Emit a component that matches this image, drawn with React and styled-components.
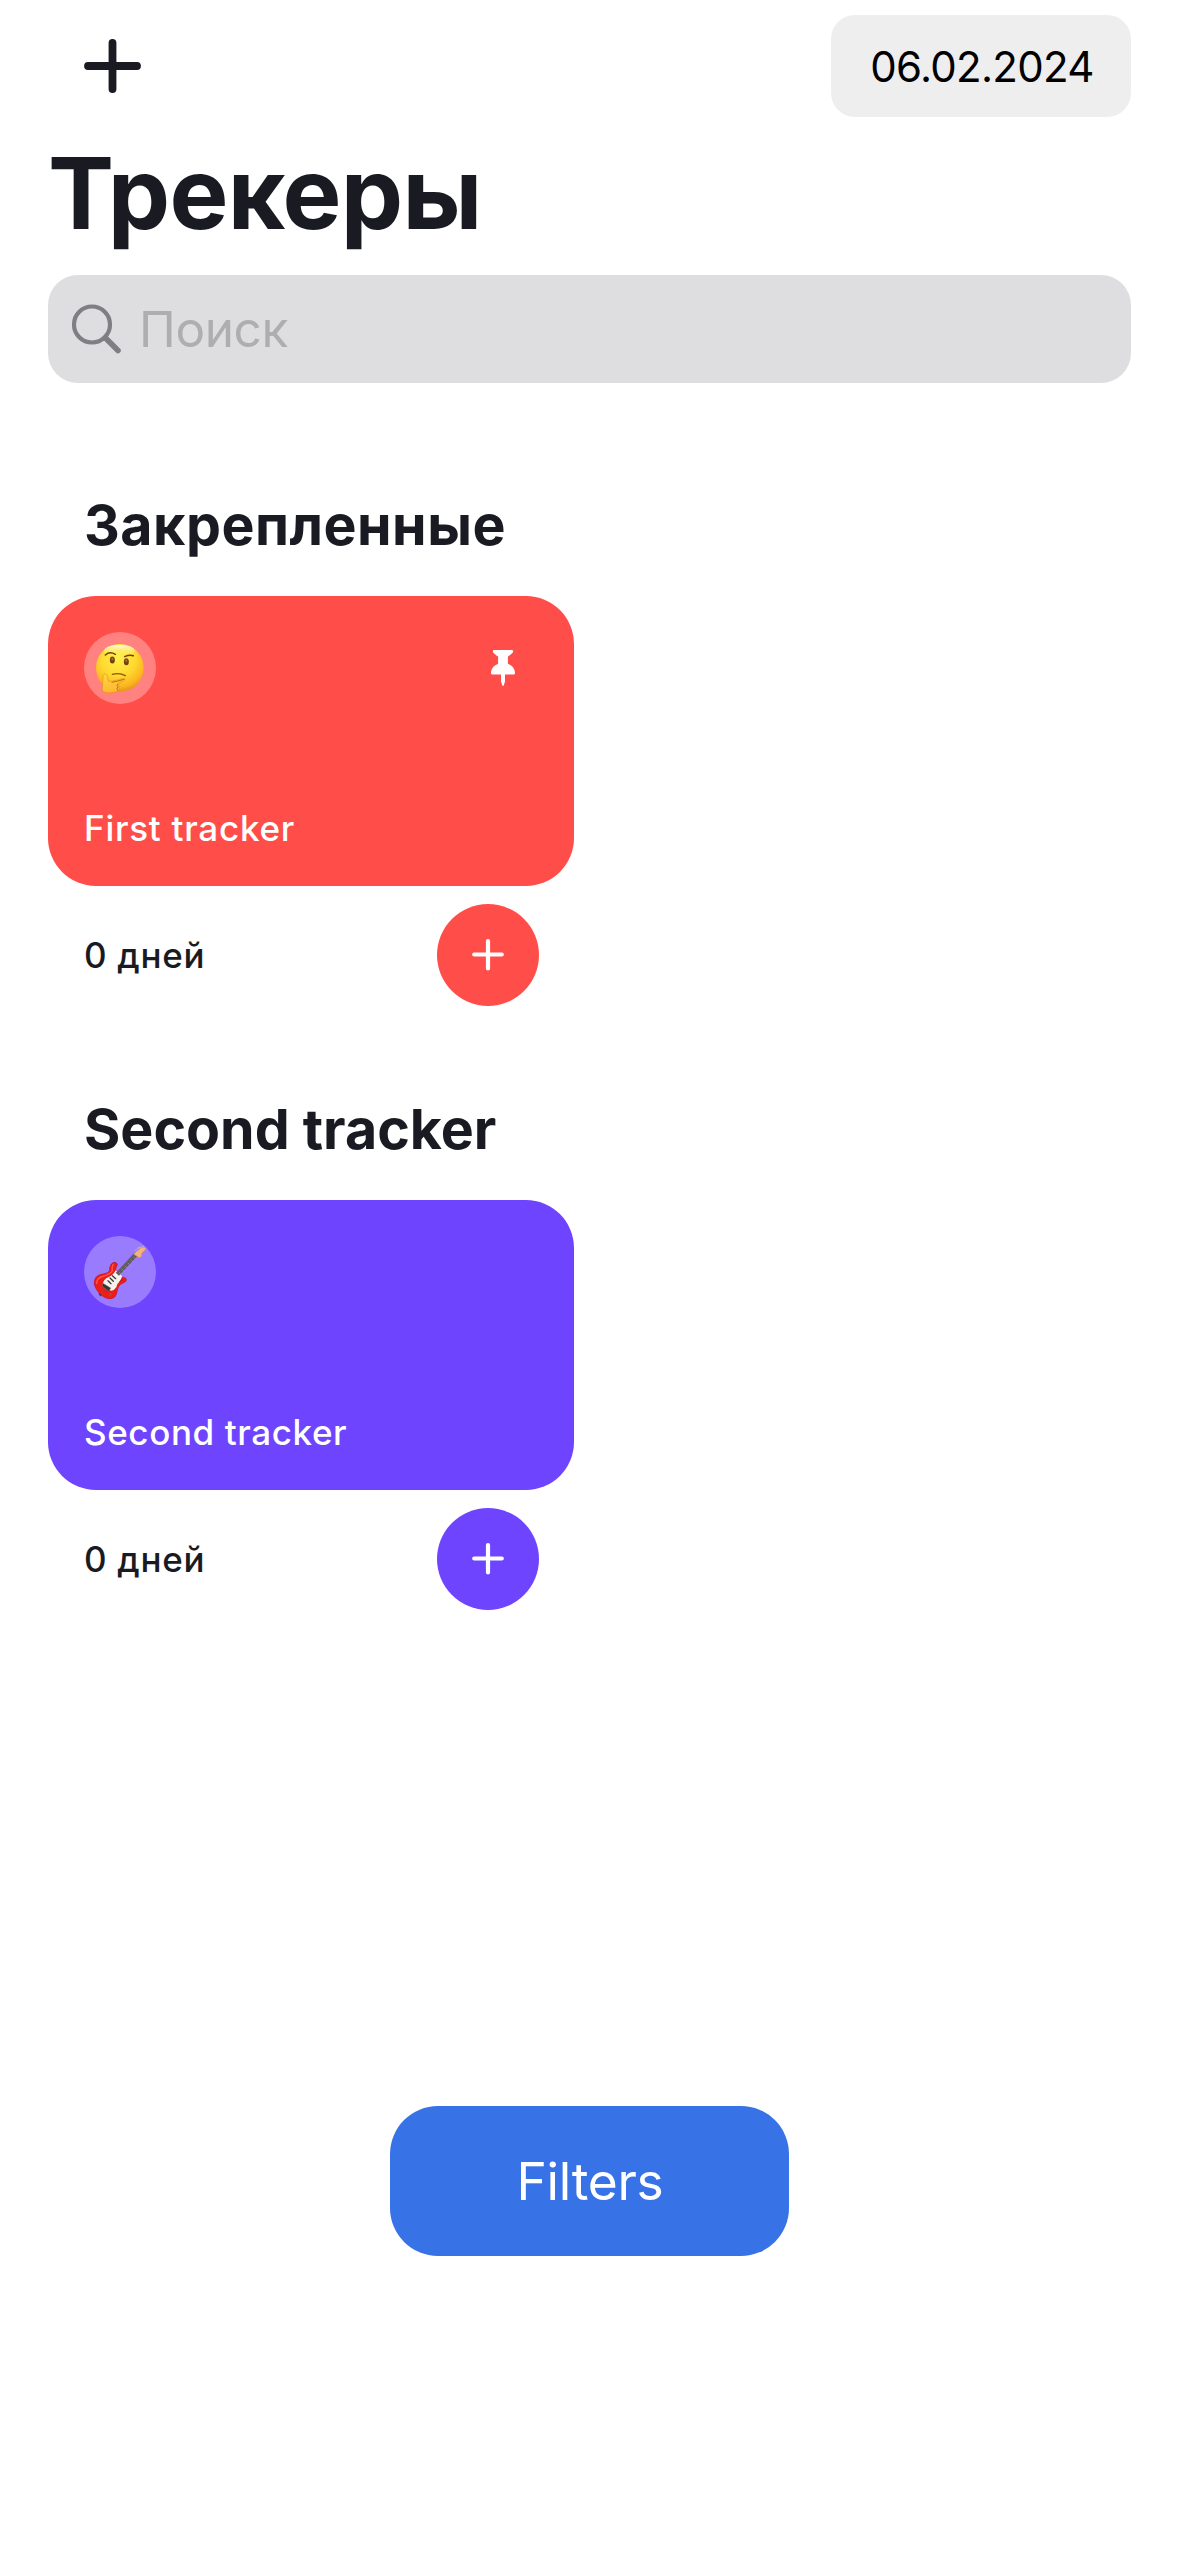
import React from 'react';
import styled, { createGlobalStyle } from 'styled-components';

const GlobalStyle = createGlobalStyle`
  * { box-sizing: border-box; }
  body { margin: 0; background: #fff; }
`;

const Screen = styled.main`
  display: flex;
  flex-direction: column;
  width: 1179px;
  height: 2556px;
  padding: 0 48px 300px;
  background: #fff;
  color: #1a1b22;
  font-family: Inter, 'Liberation Sans', sans-serif;
`;

const NavBar = styled.header`
  display: flex;
  align-items: center;
  justify-content: space-between;
  height: 132px;
  padding-left: 36px;
`;

const IconButton = styled.button`
  display: flex;
  padding: 0;
  border: 0;
  background: none;
`;

const DatePill = styled.div`
  display: flex;
  align-items: center;
  justify-content: center;
  width: 300px;
  height: 102px;
  padding-left: 2px;
  border-radius: 24px;
  background: #eeeeee;
  color: #000;
  font-size: 42px;
  letter-spacing: -0.7px;
`;

const Title = styled.h1`
  margin: 0 0 21px;
  font-size: 99px;
  font-weight: 700;
  line-height: 122px;
  letter-spacing: -0.7px;
`;

const SearchField = styled.div`
  display: flex;
  align-items: center;
  gap: 17px;
  flex: none;
  height: 108px;
  padding-left: 22px;
  border-radius: 30px;
  background: #dedee0;
  color: #aeaeb0;
  font-size: 49.5px;
  letter-spacing: -0.4px;
`;

const Sections = styled.div`
  display: flex;
  flex-direction: column;
  gap: 87px;
  padding-top: 106px;
`;

const Section = styled.section`
  width: 526px;
`;

const SectionTitle = styled.h2`
  margin: 0 0 36px;
  padding-left: 36px;
  font-size: 55.5px;
  font-weight: 700;
  line-height: 71px;
  letter-spacing: ${(p) => p.$spacing};
  white-space: nowrap;
`;

const Card = styled.article`
  display: flex;
  flex-direction: column;
  justify-content: space-between;
  height: 290px;
  padding: 36px;
  border-radius: 48px;
  background: ${(p) => p.$color};
  color: #fff;
`;

const CardTop = styled.div`
  display: flex;
  align-items: center;
  justify-content: space-between;
  padding-right: 23px;
`;

const EmojiBadge = styled.div`
  display: flex;
  width: 72px;
  height: 72px;
  border-radius: 50%;
  background: rgba(255, 255, 255, 0.3);
`;

const CardName = styled.div`
  font-size: 35px;
  font-weight: 500;
  line-height: 44px;
  letter-spacing: ${(p) => p.$spacing};
`;

const CardFooter = styled.div`
  display: flex;
  align-items: center;
  justify-content: space-between;
  margin-top: 18px;
  padding: 0 35px 0 36px;
`;

const DayCount = styled.span`
  font-size: 35px;
  font-weight: 500;
  letter-spacing: 0.7px;
`;

const RoundButton = styled.button`
  display: flex;
  align-items: center;
  justify-content: center;
  width: 102px;
  height: 102px;
  padding: 0;
  border: 0;
  border-radius: 50%;
  background: ${(p) => p.$color};
`;

const FiltersButton = styled.button`
  width: 399px;
  height: 150px;
  margin: auto auto 0;
  padding: 0 0 0 1px;
  border: 0;
  border-radius: 48px;
  background: #3772e7;
  color: #fff;
  font-family: inherit;
  font-size: 51.5px;
  line-height: 150px;
  letter-spacing: -0.3px;
`;

const PlusIcon = () => (
  <svg width="57" height="54" viewBox="0 0 57 54" fill="none" stroke="#1a1b22" strokeWidth="7.8" strokeLinecap="round">
    <path d="M4 27H53M28.5 4V50" />
  </svg>
);

const SmallPlusIcon = () => (
  <svg width="32" height="32" viewBox="0 0 32 32" fill="none" stroke="#fff" strokeWidth="4.2" strokeLinecap="round">
    <path d="M2.2 15.5H29.8M16 2.1V29.4" />
  </svg>
);

const SearchIcon = () => (
  <svg width="52" height="52" viewBox="0 0 52 52" fill="none" stroke="#7f7f83" strokeLinecap="round">
    <circle cx="22" cy="21.5" r="18" strokeWidth="4.2" />
    <path d="M35.5 35L48 47.500" strokeWidth="5.6" />
  </svg>
);

const PinIcon = () => (
  <svg width="24" height="36" viewBox="0 0 24 36" fill="#fff">
    <path d="M3.2 0H20.8C22.3 0 22.5 1.8 21.6 2.8C20.3 4.3 18.6 5.6 16.9 6.5V13.7C20.8 15.3 23.6 18.2 24 22.4C24.1 23.8 23.5 24.5 22.2 24.5H14V31.5L12.8 35.2Q12 36.6 11.2 35.2L10 31.5V24.5H1.8C.5 24.5-.1 23.8 0 22.4C.4 18.2 3.2 15.3 7.1 13.7V6.5C5.4 5.6 3.7 4.3 2.4 2.8C1.5 1.8 1.7 0 3.2 0Z" />
  </svg>
);

const ThinkingFace = () => (
  <svg width="72" height="72" viewBox="42 36 216 216" fill="none" strokeLinecap="round" strokeLinejoin="round">
    <defs>
      <radialGradient id="face" cx="0.46" cy="0.3" r="0.75">
        <stop offset="0" stopColor="#fff04a" />
        <stop offset="0.5" stopColor="#ffd82f" />
        <stop offset="0.8" stopColor="#fbb420" />
        <stop offset="1" stopColor="#dc8613" />
      </radialGradient>
      <linearGradient id="shine" x1="0" y1="0" x2="0" y2="1">
        <stop offset="0" stopColor="#fffce0" />
        <stop offset="1" stopColor="#fff04a" stopOpacity="0" />
      </linearGradient>
      <linearGradient id="hand" x1="0" y1="0" x2="0.3" y2="1">
        <stop offset="0" stopColor="#ffd84a" />
        <stop offset="1" stopColor="#ffb92c" />
      </linearGradient>
    </defs>
    <circle cx="149.500" cy="143.500" r="71.500" fill="url(#face)" />
    <ellipse cx="148" cy="93" rx="46" ry="19" fill="url(#shine)" />
    <path d="M106 105Q119 93 136 103" stroke="#70420f" strokeWidth="4.500" />
    <path d="M164 110Q177 104 190 107" stroke="#70420f" strokeWidth="4.500" />
    <ellipse cx="127" cy="120" rx="7.500" ry="10.500" fill="#70420f" />
    <ellipse cx="169" cy="125" rx="7.500" ry="10.500" fill="#70420f" />
    <ellipse cx="127" cy="117" rx="3" ry="4" fill="#a87428" />
    <ellipse cx="169" cy="122" rx="3" ry="4" fill="#a87428" />
    <path d="M127 163Q148 157 166 167" stroke="#8a5514" strokeWidth="4" />
    <path
      d="M100 165C104 158 110 162 112 170L115 184C130 184 145 179 158 176C167 175 167 181 159 184L144 190C149 196 149 209 144 214C130 219 110 220 101 215C95 209 98 201 98 194Z"
      fill="url(#hand)"
      stroke="#e8941c"
      strokeWidth="2"
    />
    <path d="M126 187Q145 183 162 178" stroke="#bb6c12" strokeWidth="3" />
    <path d="M143 192Q137 196 144 200Q138 205 143 211" stroke="#bb6c12" strokeWidth="3" />
  </svg>
);

const Guitar = () => (
  <svg width="72" height="72" viewBox="42 36 216 216" fill="none" strokeLinecap="round" strokeLinejoin="round">
    <path
      d="M124 121C127 114 137 113 141 119C144 125 137 129 137 137C139 145 144 148 148 154C153 157 158 160 163 161C170 162 171 169 166 173C160 177 152 179 147 186C141 195 142 207 136 217C130 225 117 226 106 221C89 213 76 195 73 180C72 165 79 154 94 151C110 148 119 145 119 136C118 131 121 126 124 121Z"
      fill="#ef1d18"
      stroke="#c90e1b"
      strokeWidth="2"
    />
    <path d="M129 122Q125 132 127 139C124 151 104 155 91 160Q81 165 80 178" stroke="#ff5a50" strokeWidth="4" />
    <path d="M137 139L157 157L150 171Q142 177 139 190Q130 203 119 199L99 184Q97 167 116 159Q131 153 137 139Z" fill="#f5f2ee" />
    <path d="M142 151L201 88" stroke="#655c62" strokeWidth="13" strokeLinecap="butt" />
    <path d="M147 144L154 151M156 135L163 142M165 126L172 133M174 117L181 124M183 108L190 115M191 99L198 106" stroke="#aaa0a8" strokeWidth="1.500" />
    <path d="M192 91C194 82 205 82 209 74C217 68 226 69 227 74C225 82 214 84 215 91C216 99 210 103 205 99Z" fill="#f6b278" stroke="#d98c56" strokeWidth="1.500" />
    <path d="M195 79L211 70M205 71L221 67" stroke="#b5b0cb" strokeWidth="2.500" />
    <path d="M127 155L137 164M120 162L130 172M114 170L123 179" stroke="#3b383b" strokeWidth="4" />
    <path d="M99 178L122 192L117 202L97 187Z" fill="#343234" stroke="#777" strokeWidth="1.500" />
    <path d="M149 173L157 167" stroke="#493f46" strokeWidth="3" />
    <path d="M104 199L123 203" stroke="#9d3331" strokeWidth="3" />
    <circle cx="121" cy="211" r="4" fill="#a74c48" />
    <path d="M88 210L92 214" stroke="#4a3971" strokeWidth="5" />
  </svg>
);

const trackers = [
  {
    section: 'Закрепленные',
    sectionSpacing: '0.5px',
    name: 'First tracker',
    nameSpacing: '0.75px',
    days: '0 дней',
    color: '#ff4d49',
    Emoji: ThinkingFace,
    pinned: true,
  },
  {
    section: 'Second tracker',
    sectionSpacing: '0',
    name: 'Second tracker',
    nameSpacing: '0.6px',
    days: '0 дней',
    color: '#6e44fe',
    Emoji: Guitar,
    pinned: false,
  },
];

function Tracker({ section, sectionSpacing, name, nameSpacing, days, color, Emoji, pinned }) {
  return (
    <Section>
      <SectionTitle $spacing={sectionSpacing}>{section}</SectionTitle>
      <Card $color={color}>
        <CardTop>
          <EmojiBadge>
            <Emoji />
          </EmojiBadge>
          {pinned && <PinIcon />}
        </CardTop>
        <CardName $spacing={nameSpacing}>{name}</CardName>
      </Card>
      <CardFooter>
        <DayCount>{days}</DayCount>
        <RoundButton $color={color} aria-label="+">
          <SmallPlusIcon />
        </RoundButton>
      </CardFooter>
    </Section>
  );
}

export default function App() {
  return (
    <Screen>
      <GlobalStyle />
      <NavBar>
        <IconButton aria-label="+">
          <PlusIcon />
        </IconButton>
        <DatePill>06.02.2024</DatePill>
      </NavBar>
      <Title>Трекеры</Title>
      <SearchField>
        <SearchIcon />
        <span>Поиск</span>
      </SearchField>
      <Sections>
        {trackers.map((t) => (
          <Tracker key={t.section} {...t} />
        ))}
      </Sections>
      <FiltersButton>Filters</FiltersButton>
    </Screen>
  );
}
